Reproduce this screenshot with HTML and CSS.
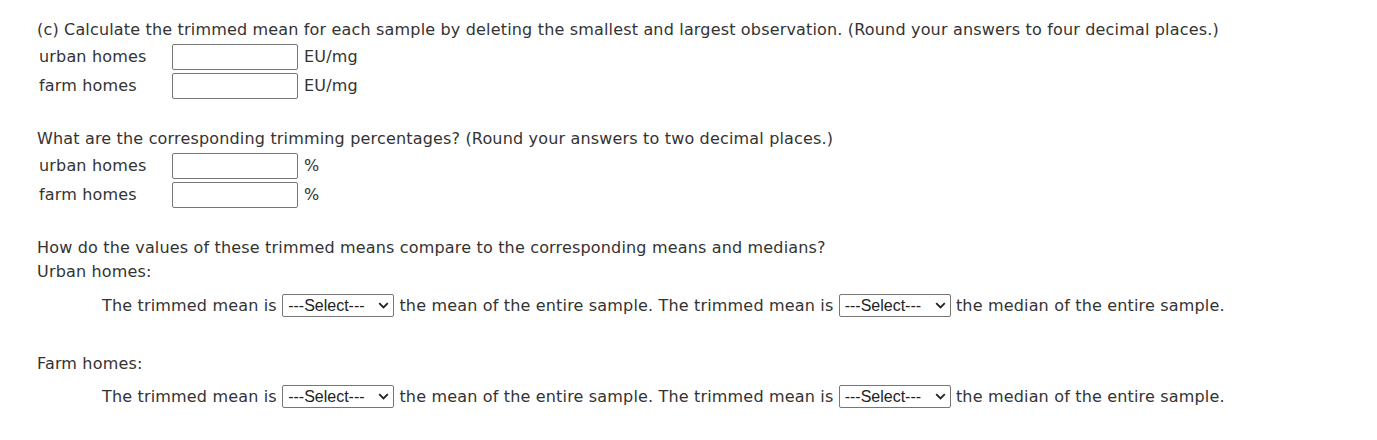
FILE: index.html
```html
<!DOCTYPE html>
<html>
<head>
<meta charset="utf-8">
<link rel="stylesheet" href="styles.css">
</head>
<body>
<div class="page">
  <section class="part">
    <p class="q">(c) Calculate the trimmed mean for each sample by deleting the smallest and largest observation. (Round your answers to four decimal places.)</p>
    <div class="row"><span class="label">urban homes</span><span class="box"></span><span class="unit">EU/mg</span></div>
    <div class="row"><span class="label">farm homes</span><span class="box"></span><span class="unit">EU/mg</span></div>
  </section>
  <section class="part">
    <p class="q">What are the corresponding trimming percentages? (Round your answers to two decimal places.)</p>
    <div class="row"><span class="label">urban homes</span><span class="box"></span><span class="unit">%</span></div>
    <div class="row"><span class="label">farm homes</span><span class="box"></span><span class="unit">%</span></div>
  </section>
  <section class="part last">
    <p class="q">How do the values of these trimmed means compare to the corresponding means and medians?</p>
    <p class="sub">Urban homes:</p>
    <div class="sentence">The trimmed mean is <span class="sel"><span class="opt">---Select---</span><svg class="chev" width="11" height="7" viewBox="0 0 11 7"><path d="M1.2 1.2 L5.5 5.5 L9.8 1.2" fill="none" stroke="#222" stroke-width="1.8"/></svg></span> the mean of the entire sample. The trimmed mean is <span class="sel"><span class="opt">---Select---</span><svg class="chev" width="11" height="7" viewBox="0 0 11 7"><path d="M1.2 1.2 L5.5 5.5 L9.8 1.2" fill="none" stroke="#222" stroke-width="1.8"/></svg></span> the median of the entire sample.</div>
    <p class="sub farm">Farm homes:</p>
    <div class="sentence s2">The trimmed mean is <span class="sel"><span class="opt">---Select---</span><svg class="chev" width="11" height="7" viewBox="0 0 11 7"><path d="M1.2 1.2 L5.5 5.5 L9.8 1.2" fill="none" stroke="#222" stroke-width="1.8"/></svg></span> the mean of the entire sample. The trimmed mean is <span class="sel"><span class="opt">---Select---</span><svg class="chev" width="11" height="7" viewBox="0 0 11 7"><path d="M1.2 1.2 L5.5 5.5 L9.8 1.2" fill="none" stroke="#222" stroke-width="1.8"/></svg></span> the median of the entire sample.</div>
  </section>
</div>
</body>
</html>
```
FILE: styles.css
```css
html, body {
  margin: 0;
  padding: 0;
  background: #fff;
}
body {
  font-family: "DejaVu Sans", Verdana, sans-serif;
  font-size: 16px;
  letter-spacing: 0.17px;
  color: #333;
}
.page {
  padding: 18px 0 0 37px;
}
.q {
  margin: 0;
  height: 24px;
  line-height: 24px;
}
.part {
  margin-bottom: 27px;
}
.part.last {
  margin-top: 27px;
}
.row {
  display: flex;
  align-items: center;
  height: 29px;
}
.label {
  width: 133px;
  padding-left: 2px;
}
.box {
  display: inline-block;
  box-sizing: border-box;
  width: 126px;
  height: 26px;
  border: 1px solid #767676;
  border-radius: 2px;
  background: #fff;
}
.unit {
  margin-left: 6px;
}
.sub {
  margin: 0;
  height: 24px;
  line-height: 24px;
}
.sentence {
  padding-left: 65px;
  margin-top: 10px;
  height: 24px;
  line-height: 24px;
  white-space: nowrap;
}
.sub.farm {
  margin-top: 34px;
}
.sentence.s2 {
  margin-top: 9px;
}
.sel {
  display: inline-flex;
  align-items: center;
  justify-content: space-between;
  box-sizing: border-box;
  width: 112px;
  height: 23px;
  padding: 0 4px 0 5px;
  border: 1px solid #767676;
  border-radius: 2px;
  font-family: "Liberation Sans", Arial, sans-serif;
  font-size: 16px;
  letter-spacing: 0;
  color: #222;
  vertical-align: middle;
  position: relative;
  top: -1px;
}
.chev {
  display: block;
}
```
